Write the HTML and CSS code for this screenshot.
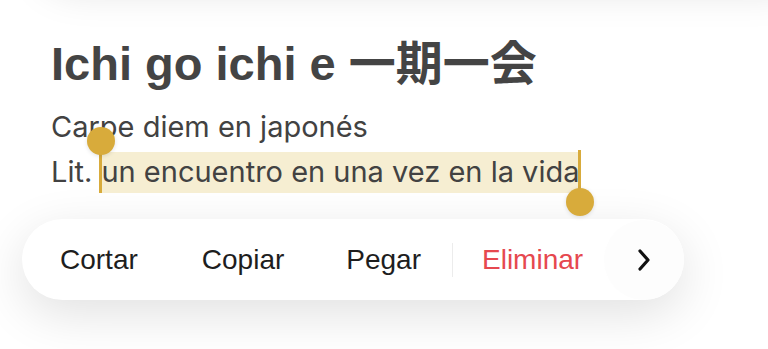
FILE: index.html
```html
<!DOCTYPE html>
<html lang="es">
<head>
<meta charset="utf-8">
<link rel="stylesheet" href="styles.css">
</head>
<body>
<div class="page">
  <div class="text">
    <h1 class="title">Ichi go ichi e <span class="cjk">一期一会</span></h1>
    <p class="line">Carpe diem en japonés</p>
    <p class="line">Lit. <span class="sel">un encuentro en una vez en la vida<span class="handle handle-start"></span><span class="handle handle-end"></span></span></p>
  </div>
  <div class="menu">
    <span class="item">Cortar</span>
    <span class="item">Copiar</span>
    <span class="item">Pegar</span>
    <span class="sep"></span>
    <span class="item danger">Eliminar</span>
    <span class="more">
      <svg width="18" height="24" viewBox="0 0 18 24" fill="none" stroke="#111" stroke-width="3.2" stroke-linecap="round" stroke-linejoin="round"><path d="M5 3 L13 12 L5 21"/></svg>
    </span>
  </div>
</div>
</body>
</html>
```

FILE: styles.css
```css
html, body {
  margin: 0;
  padding: 0;
  background: #fff;
}
body {
  width: 768px;
  height: 349px;
  overflow: hidden;
  position: relative;
}
body::before {
  content: "";
  position: absolute;
  left: 40px;
  right: -40px;
  top: -80px;
  height: 70px;
  border-radius: 40px;
  background: #fff;
  box-shadow: 0 0 40px rgba(0, 0, 0, 0.13);
}
.page {
  padding-top: 32px;
}
.text {
  padding-left: 51px;
}
.title {
  margin: 0;
  font-family: "Liberation Sans", "Noto Sans CJK JP", sans-serif;
  font-weight: 700;
  font-size: 47px;
  line-height: 56px;
  color: #444;
}
.cjk {
  font-family: "Noto Sans CJK JP", sans-serif;
  font-size: 47px;
}
.line {
  margin: 0;
  font-family: Inter, "Liberation Sans", sans-serif;
  font-size: 29px;
  line-height: 45px;
  color: #424242;
}
.title + .line {
  margin-top: 12px;
}
.sel {
  position: relative;
  background: #f6eed2;
  padding: 2px 0 4px 1px;
}
.handle {
  position: absolute;
  width: 3px;
  background: #d8ab3b;
}
.handle::after {
  content: "";
  position: absolute;
  width: 28px;
  height: 28px;
  border-radius: 50%;
  background: #d8ab3b;
  left: -12px;
  box-shadow: 0 1px 4px rgba(0, 0, 0, 0.12);
}
.handle-start {
  left: -1px;
  top: -11px;
  bottom: 0;
}
.handle-start::after {
  top: -14px;
}
.handle-end {
  right: -2px;
  top: -2px;
  bottom: -9px;
}
.handle-end::after {
  bottom: -14px;
}
.menu {
  margin: 25px 0 0 22px;
  width: 662px;
  height: 81px;
  box-sizing: border-box;
  padding-left: 7px;
  border-radius: 41px;
  background: #fff;
  box-shadow: 0 14px 50px rgba(0, 0, 0, 0.12);
  display: flex;
  align-items: center;
  font-family: "Liberation Sans", sans-serif;
  font-size: 28px;
  color: #1e1e1e;
}
.item {
  padding: 0 31px;
}
.item:first-child {
  padding-right: 33px;
}
.sep {
  width: 1px;
  height: 34px;
  background: #ececec;
  margin: 0 -2px 0 0;
}
.danger {
  color: #e6484f;
  padding-right: 0;
}
.more {
  margin-left: auto;
  width: 80px;
  height: 80px;
  border-radius: 50%;
  background: #fdfdfd;
  display: flex;
  align-items: center;
  justify-content: center;
}
```
